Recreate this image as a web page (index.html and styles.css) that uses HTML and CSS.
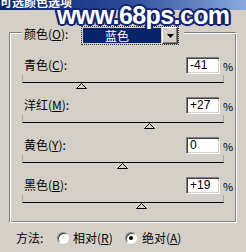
FILE: index.html
```html
<!DOCTYPE html>
<html>
<head>
<meta charset="utf-8">
<link rel="stylesheet" href="styles.css">
</head>
<body>
<div class="dialog">
  <div class="titlebar"><span class="title">可选颜色选项</span></div>
  <div class="group">
    <div class="group-head">
      <span class="head-label">颜色(<u>O</u>):</span>
      <div class="combo">
        <div class="combo-field">蓝色</div>
        <div class="combo-btn">
          <svg class="arrow" width="7" height="4" viewBox="0 0 7 4"><polygon points="0,0 7,0 3.5,4" fill="#000"/></svg>
        </div>
      </div>
    </div>
    <div class="rows">
      <div class="row">
        <div class="row-top"><span class="label">青色(<u>C</u>):</span><span class="input">-41</span><span class="pct">%</span></div>
        <div class="track"></div>
        <svg class="thumb" style="margin-left:54px" width="11" height="6" viewBox="0 0 11 6"><polygon points="5.5,0.5 10.5,5.5 0.5,5.5" fill="#d4d0c8" stroke="#000" stroke-width="1"/></svg>
      </div>
      <div class="row">
        <div class="row-top"><span class="label">洋红(<u>M</u>):</span><span class="input">+27</span><span class="pct">%</span></div>
        <div class="track"></div>
        <svg class="thumb" style="margin-left:122px" width="11" height="6" viewBox="0 0 11 6"><polygon points="5.5,0.5 10.5,5.5 0.5,5.5" fill="#d4d0c8" stroke="#000" stroke-width="1"/></svg>
      </div>
      <div class="row">
        <div class="row-top"><span class="label">黄色(<u>Y</u>):</span><span class="input">0</span><span class="pct">%</span></div>
        <div class="track"></div>
        <svg class="thumb" style="margin-left:95px" width="11" height="6" viewBox="0 0 11 6"><polygon points="5.5,0.5 10.5,5.5 0.5,5.5" fill="#d4d0c8" stroke="#000" stroke-width="1"/></svg>
      </div>
      <div class="row">
        <div class="row-top"><span class="label">黑色(<u>B</u>):</span><span class="input">+19</span><span class="pct">%</span></div>
        <div class="track"></div>
        <svg class="thumb" style="margin-left:114px" width="11" height="6" viewBox="0 0 11 6"><polygon points="5.5,0.5 10.5,5.5 0.5,5.5" fill="#d4d0c8" stroke="#000" stroke-width="1"/></svg>
      </div>
    </div>
  </div>
  <div class="method">
    <span class="method-label">方法:</span>
    <span class="radio"></span>
    <span class="radio-text first">相对(<u>R</u>)</span>
    <span class="radio checked"><span class="dot"></span></span>
    <span class="radio-text second">绝对(<u>A</u>)</span>
  </div>
  <div class="watermark">www.68ps.com</div>
</div>
</body>
</html>
```
FILE: styles.css
```css
* { box-sizing: border-box; }
html, body { margin: 0; padding: 0; }
body {
  width: 246px;
  height: 252px;
  overflow: hidden;
  background: #d4d0c8;
  font-family: "Noto Sans CJK SC", sans-serif;
  font-size: 12px;
  color: #000;
}
.dialog { position: relative; width: 246px; height: 252px; }
.titlebar {
  height: 10px;
  overflow: hidden;
  background: linear-gradient(90deg, #0a246a 0%, #2a4a98 50%, #8aaade 100%);
}
.title {
  display: block;
  margin-top: -4px;
  line-height: 12px;
  font-weight: bold;
  color: #fff;
  font-size: 12px;
}
.group {
  margin: 22px 0 0 9px;
  width: 228px;
  height: 191px;
  border-top: 1px solid #808080;
  border-left: 1px solid #808080;
  border-right: 1px solid #fff;
  border-bottom: 1px solid #fff;
  box-shadow: inset 1px 1px 0 #fff, inset -1px -1px 0 #808080;
  padding: 0 0 0 12px;
}
.group-head {
  display: flex;
  align-items: flex-start;
  width: max-content;
  margin-top: -7px;
  padding: 0 5px 0 2px;
  background: #d4d0c8;
}
.head-label { width: 57px; line-height: 14px; padding-top: 1px; }
.combo {
  width: 98px;
  height: 19px;
  border: 1px dotted #303030;
  display: flex;
}
.combo-field {
  width: 78px;
  height: 15px;
  margin: 1px;
  background: #0a246a;
  color: #fff;
  text-align: center;
  line-height: 15px;
  padding-right: 10px;
}
.combo-btn {
  width: 16px;
  height: 17px;
  border: 1px solid;
  border-color: #fff #404040 #404040 #fff;
  box-shadow: inset -1px -1px 0 #808080;
  background: #d4d0c8;
  display: flex;
  align-items: center;
  justify-content: center;
}
.arrow { display: block; }
.rows { margin-top: 12px; }
.row { height: 40px; width: 208px; }
.row-top { display: flex; height: 17px; }
.label { flex: 1; padding-left: 2px; padding-top: 1px; line-height: 14px; }
.input {
  width: 34px;
  height: 17px;
  background: #fff;
  border: 1px solid;
  border-color: #808080 #fff #fff #808080;
  box-shadow: inset 1px 1px 0 #404040, inset -1px -1px 0 #d4d0c8;
  font-family: "Liberation Sans", sans-serif;
  font-size: 12px;
  line-height: 13px;
  padding: 1px 0 0 3px;
}
.pct { width: 7px; margin-left: 3px; line-height: 14px; padding-top: 2px; font-size: 11px; }
.track {
  width: 202px;
  height: 8px;
  margin-top: 1px;
  border-left: 1px solid #aaa69e;
  border-right: 1px solid #aaa69e;
  border-bottom: 1px solid #000;
}
.thumb { display: block; }
.method {
  display: flex;
  align-items: center;
  margin-top: 8px;
  padding-left: 16px;
  height: 14px;
}
.method-label { width: 41px; line-height: 14px; }
.radio {
  width: 12px;
  height: 12px;
  border-radius: 50%;
  background: #fff;
  border: 1px solid;
  border-color: #808080 #fff #fff #808080;
  box-shadow: inset 1px 1px 0 #404040;
  display: flex;
  align-items: center;
  justify-content: center;
}
.dot { width: 4px; height: 4px; border-radius: 50%; background: #000; }
.radio-text { line-height: 14px; }
.radio-text.first { margin-left: 4px; width: 42px; margin-right: 10px; }
.radio-text.second { margin-left: 5px; }
.watermark {
  position: absolute;
  left: 57px;
  top: 3px;
  font-family: "Liberation Sans", sans-serif;
  font-weight: bold;
  font-size: 25px;
  line-height: 24px;
  letter-spacing: -0.6px;
  color: #fff;
  text-shadow:
    -2px 0 0 #14246e, 2px 0 0 #14246e, 0 -2px 0 #14246e, 0 2px 0 #14246e,
    -1px -1px 0 #14246e, 1px -1px 0 #14246e, -1px 1px 0 #14246e, 1px 1px 0 #14246e,
    -2px -1px 0 #14246e, 2px -1px 0 #14246e, -2px 1px 0 #14246e, 2px 1px 0 #14246e,
    0 0 3px #14246e;
}
```
